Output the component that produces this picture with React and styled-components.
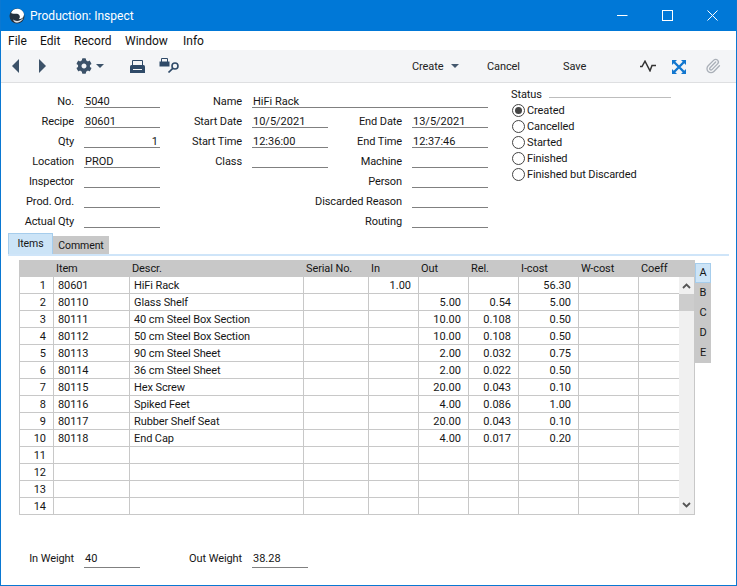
import React from "react";
import styled, { createGlobalStyle } from "styled-components";
import { FaCog } from "react-icons/fa";
import { Paperclip } from "lucide-react";

const rows = [
  ["1", "80601", "HiFi Rack", "", "1.00", "", "", "56.30"],
  ["2", "80110", "Glass Shelf", "", "", "5.00", "0.54", "5.00"],
  ["3", "80111", "40 cm Steel Box Section", "", "", "10.00", "0.108", "0.50"],
  ["4", "80112", "50 cm Steel Box Section", "", "", "10.00", "0.108", "0.50"],
  ["5", "80113", "90 cm Steel Sheet", "", "", "2.00", "0.032", "0.75"],
  ["6", "80114", "36 cm Steel Sheet", "", "", "2.00", "0.022", "0.50"],
  ["7", "80115", "Hex Screw", "", "", "20.00", "0.043", "0.10"],
  ["8", "80116", "Spiked Feet", "", "", "4.00", "0.086", "1.00"],
  ["9", "80117", "Rubber Shelf Seat", "", "", "20.00", "0.043", "0.10"],
  ["10", "80118", "End Cap", "", "", "4.00", "0.017", "0.20"],
  ["11", "", "", "", "", "", "", ""],
  ["12", "", "", "", "", "", "", ""],
  ["13", "", "", "", "", "", "", ""],
  ["14", "", "", "", "", "", "", ""],
];

const fields = [
  { label: "No.", value: "5040", col: 1 },
  { label: "Name", value: "HiFi Rack", col: 2, wide: true },
  { label: "Recipe", value: "80601", col: 1 },
  { label: "Start Date", value: "10/5/2021", col: 2 },
  { label: "End Date", value: "13/5/2021", col: 3 },
  { label: "Qty", value: "1", col: 1, right: true },
  { label: "Start Time", value: "12:36:00", col: 2 },
  { label: "End Time", value: "12:37:46", col: 3 },
  { label: "Location", value: "PROD", col: 1 },
  { label: "Class", value: "", col: 2 },
  { label: "Machine", value: "", col: 3 },
  { label: "Inspector", value: "", col: 1 },
  { label: "Person", value: "", col: 3 },
  { label: "Prod. Ord.", value: "", col: 1 },
  { label: "Discarded Reason", value: "", col: 3, long: true },
  { label: "Actual Qty", value: "", col: 1 },
  { label: "Routing", value: "", col: 3 },
];

const statuses = ["Created", "Cancelled", "Started", "Finished", "Finished but Discarded"];
const heads = ["", "Item", "Descr.", "Serial No.", "In", "Out", "Rel.", "I-cost", "W-cost", "Coeff"];

export default function App() {
  return (
    <>
      <GlobalStyle />
      <Win>
        <TitleBar>
          <svg width="16" height="16" viewBox="0 0 16 16">
            <circle cx="8" cy="8" r="7.5" fill="#26313d" />
            <path d="M2 5C3 2 6 0.5 9 0.7C12 1 14.5 3 15 6C15 9 13 11 10 11C11.5 9.5 11 7 9 6C6.5 5 4 6.5 2 5Z" fill="#fff" />
            <path d="M4 11.5C7 14 12 13 14.5 9.5C13.5 13 10 15 7 14.6C5.500 14.300 4.500 13 4 11.500Z" fill="#dfe4ea" />
          </svg>
          <TitleText>Production: Inspect</TitleText>
          <WinButtons>
            <WinButton>
              <svg width="11" height="11" viewBox="0 0 11 11"><path d="M0 5.5H10.5" stroke="#fff" /></svg>
            </WinButton>
            <WinButton>
              <svg width="11" height="11" viewBox="0 0 11 11"><rect x="0.5" y="0.5" width="10" height="10" fill="none" stroke="#fff" /></svg>
            </WinButton>
            <WinButton>
              <svg width="11" height="11" viewBox="0 0 11 11"><path d="M0.5 0.5L10.5 10.5M10.5 0.5L0.5 10.5" stroke="#fff" /></svg>
            </WinButton>
          </WinButtons>
        </TitleBar>

        <MenuBar>
          <MenuItem $width={32}>File</MenuItem>
          <MenuItem $width={34}>Edit</MenuItem>
          <MenuItem $width={51}>Record</MenuItem>
          <MenuItem $width={58}>Window</MenuItem>
          <MenuItem $width={30}>Info</MenuItem>
        </MenuBar>

        <Toolbar>
          <ToolIcon $left={11}>
            <svg width="7" height="14" viewBox="0 0 7 14"><path d="M7 0V14L0 7Z" fill="#3c5269" /></svg>
          </ToolIcon>
          <ToolIcon $left={20}>
            <svg width="7" height="14" viewBox="0 0 7 14"><path d="M0 0V14L7 7Z" fill="#3c5269" /></svg>
          </ToolIcon>
          <ToolIcon $left={30}>
            <FaCog size={16} color="#3c5269" />
          </ToolIcon>
          <ToolIcon $left={4}>
            <Caret $color="#3c5269" />
          </ToolIcon>
          <ToolIcon $left={26}>
            <svg width="15" height="13" viewBox="0 0 15 13">
              <path d="M2.500 5.500V0.500H12.500V5.500" fill="none" stroke="#2f4a68" />
              <path d="M1.500 5H13.500Q15 5 15 6.500V13H0V6.500Q0 5 1.500 5Z" fill="#2f4a68" />
              <path d="M3 9.500H12" stroke="#f4f5f7" />
            </svg>
          </ToolIcon>
          <ToolIcon $left={14}>
            <svg width="21" height="16" viewBox="0 0 21 16">
              <path d="M2.500 4V0.500H8.500V4" fill="none" stroke="#2f4a68" />
              <path d="M0.500 3.500H10.500V8.500H0.500Z" fill="#2f4a68" />
              <circle cx="16" cy="8" r="3" fill="none" stroke="#2f4a68" strokeWidth="1.6" />
              <path d="M13.800 10.300L9.500 14.500" stroke="#2f4a68" strokeWidth="1.7" />
            </svg>
          </ToolIcon>
          <ToolText $left={232} $width={33}>Create</ToolText>
          <ToolIcon $left={6}>
            <Caret $color="#44586e" />
          </ToolIcon>
          <ToolText $left={28} $width={33}>Cancel</ToolText>
          <ToolText $left={43} $width={25}>Save</ToolText>
          <ToolIcon $left={52}>
            <svg width="16" height="12" viewBox="0 0 16 12">
              <path d="M0 6.500H2L5 1.200L10 10.800L12 5.500H16" fill="none" stroke="#333" strokeWidth="1.5" />
            </svg>
          </ToolIcon>
          <ToolIcon $left={16} $down={1}>
            <svg width="14" height="14" viewBox="0 0 14 14" fill="#1277cf" stroke="none">
              <path d="M0 0H5L0 5Z" />
              <path d="M14 0V5L9 0Z" />
              <path d="M0 14V9L5 14Z" />
              <path d="M14 14H9L14 9Z" />
              <path d="M2 2L12 12M12 2L2 12" stroke="#1277cf" strokeWidth="2.4" />
            </svg>
          </ToolIcon>
          <ToolIcon $left={19}>
            <Paperclip size={16} color="#aab0b8" />
          </ToolIcon>
        </Toolbar>

        <Form>
          <FieldGrid>
            {fields.map((f) => (
              <React.Fragment key={f.label}>
                <FieldLabel $col={f.col} $long={f.long}>{f.label}</FieldLabel>
                <FieldValue $col={f.col} $wide={f.wide} $right={f.right}>{f.value}</FieldValue>
              </React.Fragment>
            ))}
          </FieldGrid>
          <StatusBox>
            <StatusHead>
              Status
              <StatusRule />
            </StatusHead>
            {statuses.map((s, i) => (
              <RadioRow key={s}>
                <Radio $on={i === 0} />
                <RadioLabel>{s}</RadioLabel>
              </RadioRow>
            ))}
          </StatusBox>
        </Form>

        <Tabs>
          <ActiveTab>Items</ActiveTab>
          <Tab>Comment</Tab>
        </Tabs>
        <TabRule />

        <TableArea>
          <Grid>
            <HeadRow>
              {heads.map((h, i) => (
                <HeadCell key={i}>{h}</HeadCell>
              ))}
            </HeadRow>
            <GridBody>
              <GridRows>
                {rows.map((r) => (
                  <Row key={r[0]}>
                    {r.map((c, i) => (
                      <Cell key={i} $num={i === 0 || i > 3}>{c}</Cell>
                    ))}
                    <Cell />
                    <Cell />
                  </Row>
                ))}
              </GridRows>
              <Scrollbar>
                <svg width="9" height="6" viewBox="0 0 9 6"><path d="M1 5L4.500 1.500L8 5" fill="none" stroke="#555" strokeWidth="1.8" /></svg>
                <Thumb />
                <ScrollSpace />
                <svg width="9" height="6" viewBox="0 0 9 6"><path d="M1 1L4.500 4.500L8 1" fill="none" stroke="#555" strokeWidth="1.8" /></svg>
              </Scrollbar>
            </GridBody>
          </Grid>
          <SideTabs>
            <SideTab $on>A</SideTab>
            <SideTab>B</SideTab>
            <SideTab>C</SideTab>
            <SideTab>D</SideTab>
            <SideTab>E</SideTab>
          </SideTabs>
        </TableArea>

        <Totals>
          <TotalLabel>In Weight</TotalLabel>
          <TotalValue>40</TotalValue>
          <TotalLabel>Out Weight</TotalLabel>
          <TotalValue>38.28</TotalValue>
        </Totals>
      </Win>
    </>
  );
}

const GlobalStyle = createGlobalStyle`
  html, body {
    margin: 0;
    padding: 0;
    background: #fff;
  }
  body {
    font-family: Roboto, "Noto Sans", sans-serif;
    font-size: 11px;
    letter-spacing: -0.1px;
    color: #161616;
  }
`;

const Win = styled.div`
  width: 737px;
  height: 586px;
  box-sizing: border-box;
  border: 1px solid #0a78d2;
  border-top: 0;
  background: #fff;
  display: flex;
  flex-direction: column;
  overflow: hidden;
`;

const TitleBar = styled.div`
  height: 31px;
  flex: none;
  background: #0078d7;
  display: flex;
  align-items: center;
  padding-left: 8px;
  color: #fff;
`;

const TitleText = styled.div`
  margin-left: 5px;
  font-size: 12px;
  letter-spacing: 0;
`;

const WinButtons = styled.div`
  margin-left: auto;
  padding-right: 1px;
  display: flex;
`;

const WinButton = styled.div`
  width: 45px;
  height: 30px;
  display: flex;
  align-items: center;
  justify-content: center;
`;

const MenuBar = styled.div`
  height: 19px;
  flex: none;
  display: flex;
  align-items: center;
  padding-left: 7px;
  font-size: 12px;
  letter-spacing: 0;
  color: #111;
`;

const MenuItem = styled.div`
  width: ${(p) => p.$width}px;
`;

const Toolbar = styled.div`
  height: 32px;
  flex: none;
  background: #f4f5f7;
  border-bottom: 1px solid #dedfe1;
  display: flex;
  align-items: center;
`;

const ToolIcon = styled.div`
  margin-left: ${(p) => p.$left}px;
  margin-top: ${(p) => p.$down || 0}px;
  display: flex;
  align-items: center;
`;

const ToolText = styled.div`
  margin-left: ${(p) => p.$left}px;
  width: ${(p) => p.$width}px;
  color: #222;
`;

const Caret = styled.div`
  width: 0;
  height: 0;
  border-left: 4px solid transparent;
  border-right: 4px solid transparent;
  border-top: 4px solid ${(p) => p.$color};
`;

const Form = styled.div`
  flex: none;
  height: 140px;
  margin-top: 6px;
  display: flex;
`;

const FieldGrid = styled.div`
  width: 487px;
  display: grid;
  grid-template-columns: 83px 76px 92px 76px 84px 76px;
  grid-auto-rows: 20px;
  grid-auto-flow: dense;
`;

const FieldLabel = styled.div`
  grid-column: ${(p) => (p.$long ? "3 / 6" : p.$col * 2 - 1)};
  text-align: right;
  padding: 5px 10px 0 0;
  line-height: 16px;
  white-space: nowrap;
`;

const FieldValue = styled.div`
  grid-column: ${(p) => (p.$wide ? "4 / 7" : p.$col * 2)};
  height: 19px;
  box-sizing: border-box;
  line-height: 16px;
  letter-spacing: 0;
  border-bottom: 1px solid #808080;
  text-align: ${(p) => (p.$right ? "right" : "left")};
  padding: ${(p) => (p.$right ? "5px 2px 0 0" : "5px 0 0 1px")};
`;

const StatusBox = styled.div`
  margin-left: 23px;
  display: flex;
  flex-direction: column;
  margin-top: -2px;
`;

const StatusHead = styled.div`
  display: flex;
  align-items: center;
  height: 15px;
`;

const StatusRule = styled.div`
  width: 122px;
  height: 1px;
  margin: 5px 0 0 7px;
  background: #bdbdbd;
`;

const RadioRow = styled.div`
  height: 16px;
  display: flex;
  align-items: center;
  gap: 2px;
`;

const RadioLabel = styled.div`
  padding-top: 1px;
`;

const Radio = styled.div`
  width: 13px;
  height: 13px;
  margin-left: 1px;
  box-sizing: border-box;
  border: 1px solid #444;
  border-radius: 50%;
  background: #fff;
  position: relative;
  &::after {
    content: "";
    display: ${(p) => (p.$on ? "block" : "none")};
    position: absolute;
    left: 2px;
    top: 2px;
    width: 7px;
    height: 7px;
    border-radius: 50%;
    background: #444;
  }
`;

const Tabs = styled.div`
  flex: none;
  height: 20px;
  margin-top: 5px;
  padding-left: 7px;
  display: flex;
  align-items: flex-end;
  font-size: 10.5px;
`;

const ActiveTab = styled.div`
  width: 45px;
  height: 21px;
  box-sizing: border-box;
  background: #cce4f7;
  border: 1px solid #a6cdec;
  border-bottom: 0;
  text-align: center;
  line-height: 20px;
`;

const Tab = styled.div`
  width: 56px;
  height: 18px;
  background: #c8c8c8;
  text-align: center;
  line-height: 19px;
`;

const TabRule = styled.div`
  flex: none;
  height: 2px;
  margin: 0 7px;
  background: #cfe5f9;
`;

const TableArea = styled.div`
  flex: none;
  display: flex;
  align-items: flex-start;
  margin: 4px 0 0 18px;
`;

const Grid = styled.div`
  width: 676px;
  box-sizing: border-box;
  border-right: 1px solid #c8c8c8;
  border-bottom: 1px solid #c8c8c8;
  border-left: 1px solid #c8c8c8;
`;

const HeadRow = styled.div`
  height: 17px;
  background: #c8c8c8;
  display: grid;
  grid-template-columns: 34px 76px 174px 65px 50px 50px 50px 60px 60px 41px;
  margin-left: -1px;
`;

const HeadCell = styled.div`
  padding-left: 3px;
  line-height: 18px;
  white-space: nowrap;
`;

const GridBody = styled.div`
  display: flex;
`;

const GridRows = styled.div`
  width: 659px;
`;

const Row = styled.div`
  height: 17px;
  box-sizing: border-box;
  display: grid;
  grid-template-columns: 34px 76px 174px 65px 50px 50px 50px 60px 60px 40px;
  border-bottom: 1px solid #c8c8c8;
  &:last-child {
    height: 16px;
    border-bottom: 0;
  }
`;

const Cell = styled.div`
  border-right: 1px solid #c8c8c8;
  line-height: 17px;
  white-space: nowrap;
  overflow: hidden;
  letter-spacing: ${(p) => (p.$num ? "0" : "-0.1px")};
  text-align: ${(p) => (p.$num ? "right" : "left")};
  padding: ${(p) => (p.$num ? "0 7px 0 0" : "0 0 0 4px")};
  &:last-child {
    border-right: 0;
  }
`;

const Scrollbar = styled.div`
  width: 15px;
  background: #f0f0f0;
  display: flex;
  flex-direction: column;
  align-items: center;
  padding: 6px 0;
  box-sizing: border-box;
`;

const Thumb = styled.div`
  align-self: stretch;
  height: 17px;
  margin-top: 5px;
  background: #cdcdcd;
`;

const ScrollSpace = styled.div`
  flex: 1;
`;

const SideTabs = styled.div`
  margin: 3px 0 0 0;
  display: flex;
  flex-direction: column;
`;

const SideTab = styled.div`
  width: 16px;
  height: 20px;
  box-sizing: border-box;
  text-align: center;
  line-height: ${(p) => (p.$on ? "18px" : "20px")};
  background: ${(p) => (p.$on ? "#cce4f7" : "#c8c8c8")};
  border: ${(p) => (p.$on ? "1px solid #a6cdec" : "0")};
`;

const Totals = styled.div`
  flex: none;
  margin-top: 31px;
  display: grid;
  grid-template-columns: 83px 56px 112px 56px;
  height: 19px;
`;

const TotalLabel = styled.div`
  text-align: right;
  padding: 5px 10px 0 0;
  line-height: 16px;
  white-space: nowrap;
`;

const TotalValue = styled.div`
  box-sizing: border-box;
  padding: 5px 0 0 1px;
  line-height: 16px;
  letter-spacing: 0;
  border-bottom: 1px solid #808080;
`;
